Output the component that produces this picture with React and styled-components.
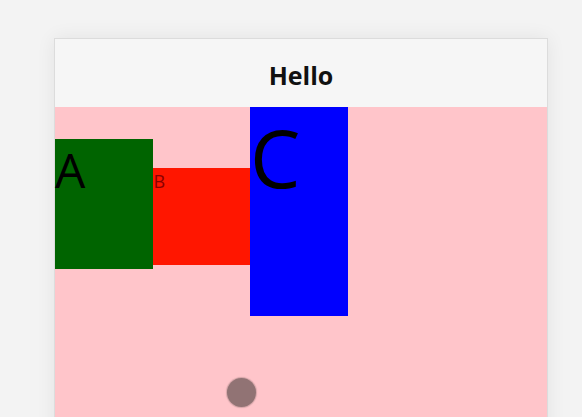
import React from "react";
import styled, { createGlobalStyle } from "styled-components";

const Global = createGlobalStyle`
  html, body {
    margin: 0;
    padding: 0;
    width: 582px;
    height: 417px;
    overflow: hidden;
    background: #f3f3f3;
    font-family: "Open Sans", "Noto Sans", sans-serif;
  }
`;

const Stage = styled.div`
  height: 417px;
  box-sizing: border-box;
  overflow: hidden;
  padding: 38px 0 0 54px;
`;

const Window = styled.div`
  width: 492px;
  height: 400px;
  border: 1px solid #dcdcdc;
  background: #ffc5ca;
  box-shadow: 0 0 18px rgba(0, 0, 0, 0.07);
  display: flex;
  flex-direction: column;
`;

const Header = styled.header`
  height: 68px;
  background: #f6f6f6;
  display: flex;
  align-items: center;
  justify-content: center;
  font-size: 25px;
  font-weight: 700;
  color: #111;
  padding-top: 3px;
  box-sizing: border-box;
`;

const Content = styled.main`
  position: relative;
  flex: 1;
  display: flex;
  flex-direction: row;
  align-items: baseline;
`;

const Box = styled.div`
  width: 97.5px;
  height: ${(p) => p.$h}px;
  background: ${(p) => p.$bg};
  color: ${(p) => p.$fg || "#000"};
  font-size: ${(p) => p.$size}px;
  line-height: ${(p) => p.$lh}px;
  flex: none;
  padding-left: ${(p) => p.$pl || 0}px;
  box-sizing: border-box;
`;

const Dot = styled.div`
  position: absolute;
  left: 172px;
  top: 271px;
  width: 29px;
  height: 29px;
  border-radius: 50%;
  background: #917374;
  box-shadow: 0 0 1px 1px rgba(145, 115, 116, 0.4);
`;

export default function App() {
  return (
    <>
      <Global />
      <Stage>
        <Window>
          <Header>Hello</Header>
          <Content>
            <Box $bg="#006400" $h={130} $size={48} $lh={61}>A</Box>
            <Box $bg="#ff1600" $h={97} $size={18} $lh={26} $fg="#8a0000" $pl={1}>B</Box>
            <Box $bg="#0000ff" $h={209} $size={80} $lh={100}>C</Box>
            <Dot />
          </Content>
        </Window>
      </Stage>
    </>
  );
}
